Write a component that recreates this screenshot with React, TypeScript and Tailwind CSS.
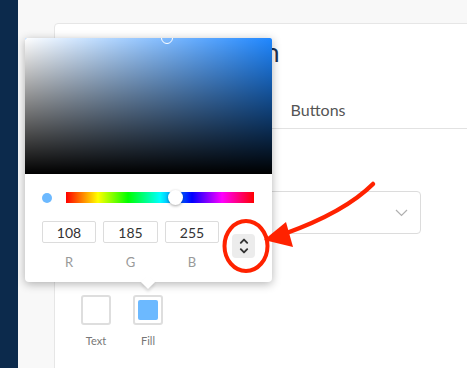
import React from "react";

function Chevrons() {
  return (
    <svg width="10" height="18" viewBox="0 0 10 18" fill="none" stroke="#333" strokeWidth="1.9" strokeLinecap="round" strokeLinejoin="round">
      <path d="M1.8 5.8 L5 2.6 L8.2 5.8" />
      <path d="M1.8 12.2 L5 15.4 L8.2 12.2" />
    </svg>
  );
}

function RgbField({ value, label, w }: { value: string; label: string; w: string }) {
  return (
    <div className="flex flex-col items-center">
      <div className={`${w} h-[22px] border border-[#dcdcdc] rounded-[2px] flex items-center justify-center text-[14px] text-[#333]`}>{value}</div>
      <div className="mt-[11px] text-[13px] leading-4 text-[#999]">{label}</div>
    </div>
  );
}

export default function App() {
  return (
    <div className="relative w-[467px] h-[368px] overflow-hidden flex bg-[#f8f8f8]" style={{ fontFamily: "Lato, 'Open Sans', sans-serif" }}>
      <div className="w-[18px] h-full bg-[#0c2a4c] shrink-0" />
      <div className="flex-1 pl-[36px] pt-[23px]">
        <div className="w-[460px] h-[400px] bg-white border border-[#e6e6e6] rounded-tl-[4px] flex flex-col">
          <div className="mt-[12px] pl-[26px] h-[32px] text-[26px] leading-8 text-[#1d3152] whitespace-nowrap">Advanced Design</div>
          <div className="mt-[30px] h-[31px] border-b border-[#e2e2e2] flex gap-[24px] pl-[26px]">
            <div className="text-[16px] leading-6 text-[#666]">General</div>
            <div className="text-[16px] leading-6 text-[#666]">Layout</div>
            <div className="text-[16px] leading-6 text-[#555] ml-[59px]">Buttons</div>
          </div>
          <div className="pl-[26px] mt-[29px] text-[14px] leading-5 text-[#333]">Style</div>
          <div className="ml-[26px] mt-[13px] w-[340px] h-[43px] border border-[#dcdcdc] rounded-[4px] flex items-center justify-end pr-[12px]">
            <svg width="13" height="8" viewBox="0 0 13 8" fill="none" stroke="#b0b0b0" strokeWidth="1.2"><path d="M1 1 L6.5 6.5 L12 1" /></svg>
          </div>
          <div className="h-[20px] mt-[33px]" />
          <div className="pl-[26px] mt-[8px] flex gap-[22px]">
            <div className="flex flex-col items-center w-[30px]">
              <div className="w-[30px] h-[30px] border-2 border-[#dedede] rounded-[3px] bg-white" />
              <div className="mt-[8px] text-[11px] leading-4 text-[#777]">Text</div>
            </div>
            <div className="flex flex-col items-center w-[30px]">
              <div className="w-[30px] h-[30px] border-2 border-[#dedede] rounded-[3px] bg-white p-[3px]">
                <div className="w-full h-full rounded-[2px] bg-[#6cb9ff]" />
              </div>
              <div className="mt-[8px] text-[11px] leading-4 text-[#777]">Fill</div>
            </div>
          </div>
        </div>
      </div>

      {/* color picker popup */}
      <div className="absolute left-[25px] top-[38px] w-[247px] h-[244px] bg-white rounded-b-[4px] shadow-[0_2px_10px_rgba(0,0,0,0.3)]">
        <div className="relative w-full h-[136px] rounded-t-[2px] overflow-hidden" style={{ background: "hsl(212,100%,56%)" }}>
          <div className="absolute inset-0 bg-[linear-gradient(to_right,#fff,rgba(255,255,255,0))]" />
          <div className="absolute inset-0 bg-[linear-gradient(to_top,#000,rgba(0,0,0,0))]" />
          <div className="absolute left-[136px] top-[-6px] w-[12px] h-[12px] rounded-full border-[1.5px] border-white" />
        </div>
        <div className="px-[17px]">
          <div className="mt-[18px] flex items-center gap-[14px]">
            <div className="w-[10px] h-[10px] rounded-full bg-[#6cb9ff]" />
            <div className="relative w-[188px] h-[11px] bg-[linear-gradient(to_right,#f00_0%,#ff0_17%,#0f0_33%,#0ff_50%,#00f_67%,#f0f_83%,#f00_100%)]">
              <div className="absolute left-[102px] top-[-2px] w-[15px] h-[15px] rounded-full bg-white shadow-[0_1px_3px_rgba(0,0,0,0.35)]" />
            </div>
          </div>
          <div className="mt-[18px] flex items-start">
            <div className="flex gap-[7px]">
              <RgbField value="108" label="R" w="w-[54px]" />
              <RgbField value="185" label="G" w="w-[55px]" />
              <RgbField value="255" label="B" w="w-[54px]" />
            </div>
            <div className="ml-[13px] mt-[13px] w-[27px] h-[24px] rounded-[4px] bg-[#ececec] flex items-center justify-center">
              <Chevrons />
            </div>
          </div>
        </div>
        <div className="absolute left-[118px] bottom-[-5px] w-[10px] h-[10px] bg-white rotate-45 shadow-[2px_2px_3px_rgba(0,0,0,0.12)]" />
      </div>

      {/* annotation */}
      <svg className="absolute inset-0 pointer-events-none" width="467" height="368" viewBox="0 0 467 368">
        <ellipse cx="246" cy="246" rx="21.5" ry="25" fill="none" stroke="#ff2200" strokeWidth="4" />
        <path d="M373 184 Q345 212 284 234" fill="none" stroke="#ff2200" strokeWidth="4.5" strokeLinecap="round" />
        <polygon points="264,240 286,222 293,247" fill="#ff2200" />
      </svg>
    </div>
  );
}
